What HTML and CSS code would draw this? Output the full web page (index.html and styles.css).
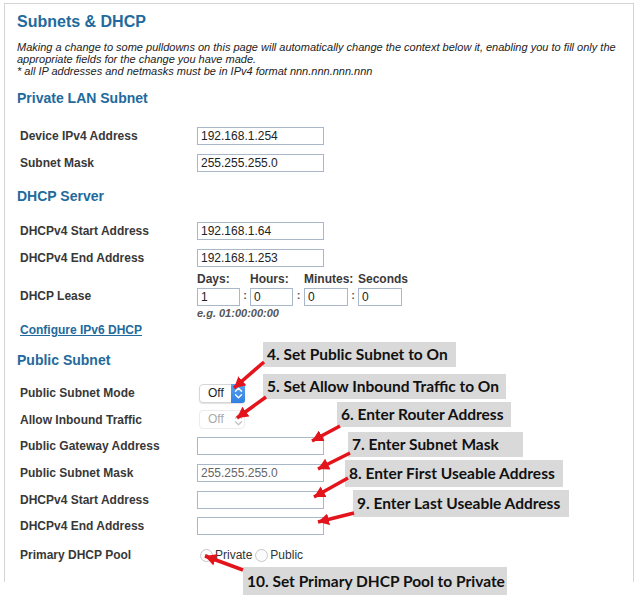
FILE: index.html
```html
<!DOCTYPE html>
<html>
<head>
<meta charset="utf-8">
<link rel="stylesheet" href="styles.css">
</head>
<body>
<div class="page">
  <h1 class="title">Subnets &amp; DHCP</h1>
  <p class="desc">Making a change to some pulldowns on this page will automatically change the context below it, enabling you to fill only the<br>appropriate fields for the change you have made.<br>* all IP addresses and netmasks must be in IPv4 format nnn.nnn.nnn.nnn</p>

  <h2 class="section sec-lan">Private LAN Subnet</h2>
  <div class="rows rows-lan">
    <div class="row"><span class="lbl">Device IPv4 Address</span><input class="ip" type="text" value="192.168.1.254"></div>
    <div class="row"><span class="lbl">Subnet Mask</span><input class="ip" type="text" value="255.255.255.0"></div>
  </div>

  <h2 class="section sec-dhcp">DHCP Server</h2>
  <div class="rows rows-dhcp">
    <div class="row"><span class="lbl">DHCPv4 Start Address</span><input class="ip" type="text" value="192.168.1.64"></div>
    <div class="row"><span class="lbl">DHCPv4 End Address</span><input class="ip" type="text" value="192.168.1.253"></div>
  </div>
  <div class="lease">
    <span class="lbl lease-lbl">DHCP Lease</span>
    <div class="lease-grid">
      <span class="lh">Days:</span><span></span><span class="lh">Hours:</span><span></span><span class="lh">Minutes:</span><span></span><span class="lh">Seconds</span>
      <input class="lt" type="text" value="1"><span class="colon">:</span><input class="lt" type="text" value="0"><span class="colon">:</span><input class="lt" type="text" value="0"><span class="colon">:</span><input class="lt" type="text" value="0">
    </div>
  </div>
  <div class="eg">e.g. 01:00:00:00</div>
  <a class="cfg" href="#">Configure IPv6 DHCP</a>

  <h2 class="section sec-pub">Public Subnet</h2>
  <div class="rows rows-pub">
    <div class="row"><span class="lbl">Public Subnet Mode</span>
      <span class="sel"><span class="sel-txt">Off</span><span class="sel-btn"><svg width="9" height="14" viewBox="0 0 9 14"><path d="M1.5 5.2 L4.5 2.2 L7.5 5.2 M1.5 8.8 L4.5 11.8 L7.5 8.8" fill="none" stroke="#fff" stroke-width="1.4" stroke-linecap="round" stroke-linejoin="round"/></svg></span></span>
    </div>
    <div class="row"><span class="lbl">Allow Inbound Traffic</span>
      <span class="sel sel-dis"><span class="sel-txt">Off</span><span class="sel-btn"><svg width="9" height="14" viewBox="0 0 9 14"><path d="M1.5 5.2 L4.5 2.2 L7.5 5.2 M1.5 8.8 L4.5 11.8 L7.5 8.8" fill="none" stroke="#c4c4c4" stroke-width="1.3" stroke-linecap="round" stroke-linejoin="round"/></svg></span></span>
    </div>
    <div class="row"><span class="lbl">Public Gateway Address</span><input class="ip" type="text" value=""></div>
    <div class="row"><span class="lbl">Public Subnet Mask</span><input class="ip ip-gray" type="text" value="255.255.255.0"></div>
    <div class="row"><span class="lbl">DHCPv4 Start Address</span><input class="ip" type="text" value=""></div>
    <div class="row"><span class="lbl">DHCPv4 End Address</span><input class="ip" type="text" value=""></div>
    <div class="row row-pool"><span class="lbl">Primary DHCP Pool</span>
      <span class="radios"><span class="radio radio-on"></span><span class="rtxt">Private</span><span class="radio"></span><span class="rtxt">Public</span></span>
    </div>
  </div>
</div>

<div class="note n4">4. Set Public Subnet to On</div>
<div class="note n5">5. Set Allow Inbound Traffic to On</div>
<div class="note n6">6. Enter Router Address</div>
<div class="note n7">7. Enter Subnet Mask</div>
<div class="note n8">8. Enter First Useable Address</div>
<div class="note n9">9. Enter Last Useable Address</div>
<div class="note n10">10. Set Primary DHCP Pool to Private</div>

<svg class="arrows" width="638" height="596" viewBox="0 0 638 596">
  <defs>
    <marker id="ah" markerUnits="userSpaceOnUse" markerWidth="12" markerHeight="12" refX="11" refY="6" orient="auto">
      <path d="M0 0 L11 6 L0 12 z" fill="#e3141b"/>
    </marker>
  </defs>
  <g stroke="#e3141b" stroke-width="3.5" marker-end="url(#ah)">
    <line x1="264" y1="362" x2="234" y2="388"/>
    <line x1="266" y1="397" x2="237" y2="418"/>
    <line x1="340" y1="426" x2="312" y2="441"/>
    <line x1="350" y1="453" x2="318" y2="469"/>
    <line x1="348" y1="478" x2="314" y2="497"/>
    <line x1="354" y1="513" x2="318" y2="522"/>
    <line x1="243" y1="570" x2="205" y2="556"/>
  </g>
</svg>
</body>
</html>
```

FILE: styles.css
```css
html, body {
  margin: 0;
  padding: 0;
  background: #fff;
}
body {
  position: relative;
  width: 638px;
  height: 596px;
  overflow: hidden;
  font-family: "Liberation Sans", Arial, sans-serif;
  color: #333;
}
.page {
  margin: 3px 0 0 4px;
  width: 630px;
  height: 579px;
  border: 1px solid #d4d4d4;
  border-bottom: none;
  padding: 0 0 0 12px;
  box-sizing: border-box;
}
.title {
  margin: 7px 0 0 0;
  font-size: 16px;
  line-height: 22px;
  font-weight: bold;
  color: #226a9c;
}
.desc {
  margin: 8px 0 0 0;
  font-size: 11px;
  line-height: 12px;
  font-style: italic;
  color: #222;
  white-space: nowrap;
}
.section {
  font-size: 14px;
  line-height: 18px;
  font-weight: bold;
  color: #226a9c;
  margin: 0;
}
.sec-lan { margin-top: 12px; }
.sec-dhcp { margin-top: 11px; }
.sec-pub { margin-top: 12px; }
.rows {
  padding-left: 3px;
}
.rows-lan { margin-top: 15px; }
.rows-dhcp { margin-top: 12px; }
.rows-pub { margin-top: 11px; }
.row {
  display: flex;
  align-items: center;
  height: 27px;
}
.rows-pub .row { height: 26.6px; }
.rows-pub .row-pool { margin-top: 2.5px; }
.lbl {
  width: 177px;
  flex: none;
  font-size: 12px;
  font-weight: bold;
  color: #383838;
}
.ip {
  width: 127px;
  height: 18px;
  box-sizing: border-box;
  border: 1px solid #a9b8c8;
  border-radius: 0;
  padding: 0 3px;
  margin: 0;
  font-family: "Liberation Sans", Arial, sans-serif;
  font-size: 12px;
  color: #222;
  background: #fff;
  outline: none;
}
.ip-gray { color: #666; }
.lease {
  display: flex;
  align-items: flex-end;
  padding-left: 3px;
  margin-top: 1px;
}
.lease-lbl {
  padding-bottom: 3px;
}
.lease-grid {
  display: grid;
  grid-template-columns: 43px 10px 43px 11px 44px 10px 44px;
  grid-template-rows: 14px 18px;
  row-gap: 2px;
  align-items: center;
}
.lh {
  font-size: 12px;
  font-weight: bold;
  color: #3a3a3a;
  white-space: nowrap;
  line-height: 14px;
}
.lt {
  width: 100%;
  height: 18px;
  box-sizing: border-box;
  border: 1px solid #a9b8c8;
  padding: 0 3px;
  margin: 0;
  font-family: "Liberation Sans", Arial, sans-serif;
  font-size: 12px;
  color: #222;
  outline: none;
}
.colon {
  font-size: 11px;
  font-weight: bold;
  color: #555;
  text-align: center;
  line-height: 12px;
  align-self: start;
  padding-top: 1px;
}
.eg {
  margin-left: 180px;
  font-size: 11px;
  line-height: 14px;
  font-weight: bold;
  font-style: italic;
  color: #555;
}
.cfg {
  display: inline-block;
  margin-left: 3px;
  margin-top: 1px;
  font-size: 12px;
  line-height: 18px;
  font-weight: bold;
  color: #226a9c;
  text-decoration: underline;
}
.sel {
  display: inline-flex;
  align-items: stretch;
  width: 46px;
  height: 19px;
  box-sizing: border-box;
  margin-left: 2px;
  border: 1px solid #d6d6d6;
  border-radius: 4px;
  background: #fff;
  box-shadow: 0 1px 1px rgba(0,0,0,0.12);
}
.sel-txt {
  flex: 1;
  font-size: 12px;
  line-height: 17px;
  padding-left: 8px;
  color: #222;
}
.sel-btn {
  width: 14px;
  display: flex;
  align-items: center;
  justify-content: center;
  background: linear-gradient(#5aa2ee, #2f80e0);
  border-radius: 0 3px 3px 0;
  margin: -1px -1px -1px 0;
}
.sel-dis {
  border-color: #ececec;
  box-shadow: none;
}
.sel-dis .sel-txt { color: #aaa; }
.sel-dis .sel-btn { background: none; }
.radios {
  display: flex;
  align-items: center;
  font-size: 12px;
  color: #333;
  margin-left: 3px;
}
.radio {
  width: 13px;
  height: 13px;
  box-sizing: border-box;
  border: 1px solid #c8c8c8;
  border-radius: 50%;
  background: #fbfbfb;
  position: relative;
}
.radio-on::after {
  content: "";
  position: absolute;
  left: 4px;
  top: 4px;
  width: 3px;
  height: 3px;
  border-radius: 50%;
  background: #999;
}
.rtxt {
  margin: 0 3px 0 2px;
}
.note {
  position: absolute;
  background: #d9d9d9;
  color: #111;
  font-family: Lato, "Open Sans", sans-serif;
  font-weight: bold;
  font-size: 15.5px;
  line-height: 25px;
  height: 25px;
  padding: 0 4px 0 4px;
  white-space: nowrap;
  box-sizing: border-box;
}
.n4 { left: 263px; top: 342px; width: 193px; }
.n5 { left: 263px; top: 374px; width: 243px; }
.n6 { left: 337px; top: 402px; width: 174px; }
.n7 { left: 348px; top: 432px; width: 175px; }
.n8 { left: 345px; top: 460px; width: 218px; height: 27px; line-height: 27px; }
.n9 { left: 353px; top: 490px; width: 216px; height: 27px; line-height: 27px; }
.n10 { left: 243px; top: 567px; width: 264px; height: 28px; line-height: 28px; }
.arrows {
  position: absolute;
  left: 0;
  top: 0;
  pointer-events: none;
}
```
